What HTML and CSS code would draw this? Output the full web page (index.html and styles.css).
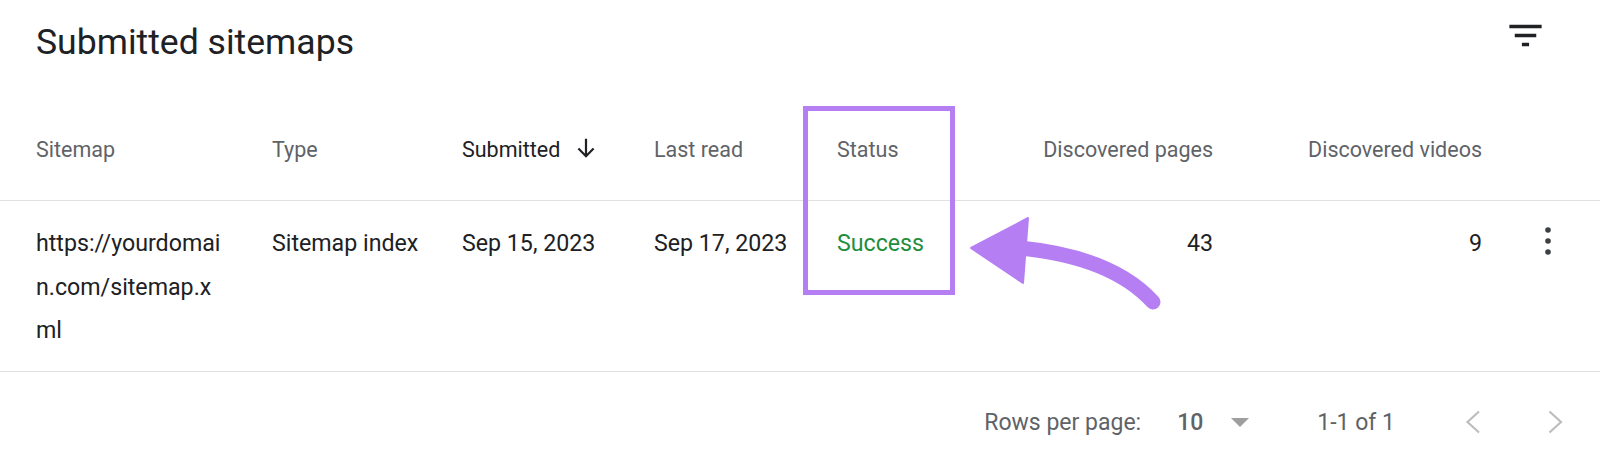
FILE: index.html
```html
<!DOCTYPE html>
<html lang="en">
<head>
<meta charset="utf-8">
<title>Submitted sitemaps</title>
<link rel="stylesheet" href="styles.css">
</head>
<body>
<div class="page">
  <div class="titlebar">
    <h1 class="title">Submitted sitemaps</h1>
    <div class="filter-btn">
      <svg width="43" height="43" viewBox="0 0 24 24"><path fill="#202124" d="M10 18h4v-2h-4v2zM3 6v2h18V6H3zm3 7h12v-2H6v2z"/></svg>
    </div>
  </div>

  <div class="table">
    <div class="row head">
      <div class="cell">Sitemap</div>
      <div class="cell">Type</div>
      <div class="cell sorted">Submitted
        <svg class="sort-icon" width="28" height="28" viewBox="0 0 24 24"><path d="M12 4v15M5.5 12.5L12 19l6.5-6.5" fill="none" stroke="#202124" stroke-width="1.9"/></svg>
      </div>
      <div class="cell">Last read</div>
      <div class="cell">Status</div>
      <div class="cell num">Discovered pages</div>
      <div class="cell num">Discovered videos</div>
      <div class="cell"></div>
    </div>
    <div class="row body">
      <div class="cell"><span class="url">https://yourdomain.com/sitemap.xml</span></div>
      <div class="cell">Sitemap index</div>
      <div class="cell">Sep 15, 2023</div>
      <div class="cell">Sep 17, 2023</div>
      <div class="cell success">Success</div>
      <div class="cell num">43</div>
      <div class="cell num">9</div>
      <div class="cell actions">
        <svg width="12" height="30" viewBox="0 0 12 30"><circle cx="6" cy="4" r="2.8" fill="#3c4043"/><circle cx="6" cy="15" r="2.8" fill="#3c4043"/><circle cx="6" cy="26" r="2.8" fill="#3c4043"/></svg>
      </div>
    </div>
  </div>

  <div class="pager">
    <span class="rows-label">Rows per page:</span>
    <span class="rows-value">10</span>
    <svg class="drop" width="18" height="9" viewBox="0 0 18 9"><path d="M0 0h18L9 9z" fill="#9e9e9e"/></svg>
    <span class="range">1-1 of 1</span>
    <div class="nav-btn prev">
      <svg width="42" height="42" viewBox="0 0 42 42"><path d="M26 10.5L14.5 21L26 31.5" fill="none" stroke="#bdbdbd" stroke-width="2.2"/></svg>
    </div>
    <div class="nav-btn next">
      <svg width="42" height="42" viewBox="0 0 42 42"><path d="M15.5 10.5L27 21L15.5 31.5" fill="none" stroke="#bdbdbd" stroke-width="2.2"/></svg>
    </div>
  </div>

  <svg class="annot" width="1600" height="460" viewBox="0 0 1600 460">
    <rect x="805.5" y="108.5" width="147" height="184" fill="none" stroke="#b57ff3" stroke-width="5"/>
    <path d="M1153 302 Q1112 257 1020 248" fill="none" stroke="#b57ff3" stroke-width="15" stroke-linecap="round"/>
    <path d="M971 248 L1028 218 L1023 283 Z" fill="#b57ff3" stroke="#b57ff3" stroke-width="2" stroke-linejoin="round"/>
  </svg>
</div>
</body>
</html>
```

FILE: styles.css
```css
* { box-sizing: border-box; }

html, body {
  margin: 0;
  padding: 0;
  background: #ffffff;
}

body {
  font-family: Roboto, "Noto Sans", "Liberation Sans", sans-serif;
  color: #202124;
  width: 1600px;
  height: 460px;
  overflow: hidden;
}

.page {
  position: relative;
  width: 1600px;
  height: 460px;
}

.titlebar {
  height: 96px;
  display: flex;
  justify-content: space-between;
  align-items: flex-start;
  padding: 20px 53px 0 36px;
}

.title {
  margin: 0;
  font-size: 35.6px;
  line-height: 44px;
  font-weight: 400;
  color: #202124;
}

.filter-btn {
  margin-top: -6px;
  width: 43px;
  height: 43px;
}

.filter-btn svg { display: block; }

.row {
  display: grid;
  grid-template-columns: 236px 190px 192px 183px 163px 213px 269px 118px;
  padding-left: 36px;
  border-bottom: 1px solid #e0e0e0;
}

.row.head {
  height: 105px;
  padding-top: 42px;
  font-size: 21.5px;
  line-height: 24px;
  color: #5f6368;
}

.row.head .sorted {
  color: #202124;
  display: flex;
  align-items: center;
  height: 24px;
}

.sort-icon {
  margin-left: 12px;
  margin-top: -4px;
  flex: none;
}

.row.body {
  padding-top: 21px;
  padding-bottom: 18.5px;
  font-size: 23.2px;
  line-height: 43.5px;
  color: #202124;
}

.url {
  display: block;
  width: 188px;
  word-break: break-all;
}

.num { text-align: right; }

.success { color: #1e8e3e; }

.actions {
  display: flex;
  align-items: flex-start;
  padding-left: 60px;
}

.actions svg {
  display: block;
  margin-top: 4px;
}

.pager {
  display: flex;
  justify-content: flex-end;
  align-items: flex-start;
  padding: 39px 24px 0 0;
  font-size: 23px;
  line-height: 24px;
  color: #5f6368;
}

.rows-value {
  margin-left: 36px;
  font-weight: 500;
  color: #5f6368;
}

.drop {
  margin-left: 28px;
  margin-top: 7px;
}

.range {
  margin-left: 68px;
}

.nav-btn {
  width: 42px;
  height: 42px;
  margin-top: -10px;
}

.nav-btn svg { display: block; }

.nav-btn.prev { margin-left: 58px; }
.nav-btn.next { margin-left: 39px; }

.annot {
  position: absolute;
  left: 0;
  top: 0;
  pointer-events: none;
}
```
